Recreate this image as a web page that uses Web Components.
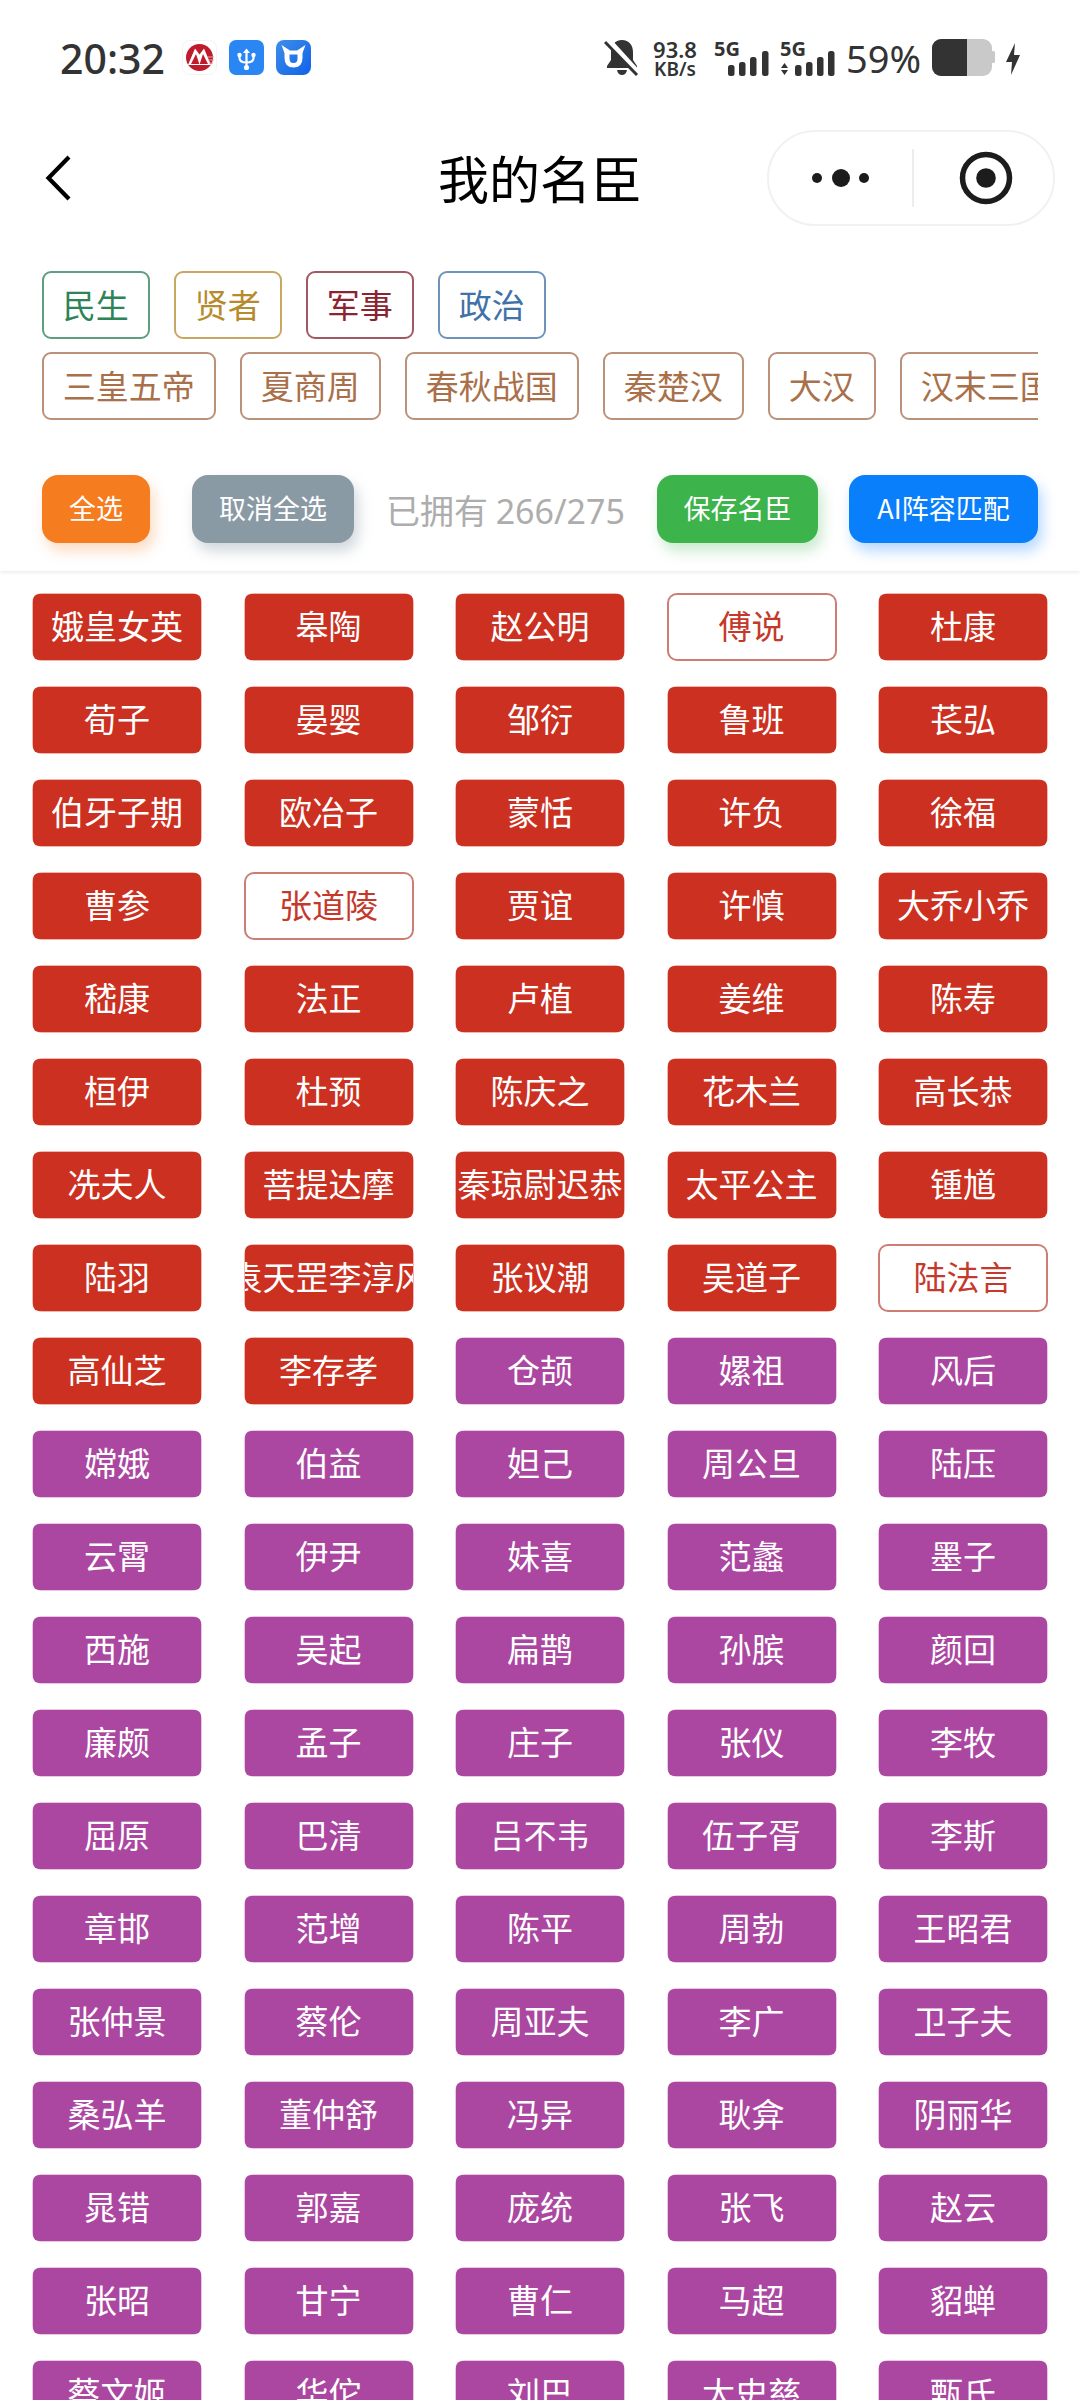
<!DOCTYPE html>
<html lang="zh">
<head>
<meta charset="utf-8">
<title>我的名臣</title>
<style>
  html, body { margin: 0; padding: 0; background: #fff; }
  body { width: 1080px; height: 2400px; overflow: hidden; font-family: "Noto Sans CJK SC", "Noto Sans", sans-serif; }
</style>
</head>
<body>
<status-bar></status-bar>
<nav-bar heading="我的名臣"></nav-bar>
<filter-panel></filter-panel>
<minister-grid></minister-grid>

<script>
class StatusBar extends HTMLElement {
    constructor() {
        super();
        this.attachShadow({ mode: 'open' });
    }

    connectedCallback() {
        const bars = (a, b, c, d) => `
            <rect x="${a}" y="27" width="6.5" height="11" rx="2.5" fill="#333"/>
            <rect x="${b}" y="24" width="6.5" height="14" rx="2.5" fill="#333"/>
            <rect x="${c}" y="19" width="6.5" height="19" rx="2.5" fill="#333"/>
            <rect x="${d}" y="13" width="6.5" height="25" rx="2.5" fill="#333"/>`;
        this.shadowRoot.innerHTML = `
            <style>
                :host { display: flex; height: 116px; box-sizing: border-box; padding: 38px 58px 0 60px; justify-content: space-between; color: #333; font-family: "Noto Sans", "Open Sans", sans-serif; }
                .left, .right { display: flex; align-items: flex-start; height: 40px; }
                .time { width: 122px; font-size: 41px; font-weight: 500; line-height: 40px; }
                .app { width: 35px; height: 35px; margin: 2px 12px 0 0; flex: none; display: block; }
                .bell { width: 36px; height: 38px; display: block; }
                .speed { margin-left: 13px; width: 44px; display: flex; flex-direction: column; align-items: center; font-weight: 600; }
                .speed b { font-size: 22px; line-height: 22px; font-weight: 600; }
                .speed i { font-style: normal; font-size: 19px; line-height: 19px; }
                .sig { display: block; width: 56px; height: 38px; margin-left: 17px; overflow: visible; }
                .sig + .sig { margin-left: 10px; }
                .pct { width: 76px; font-size: 38px; line-height: 40px; margin-left: 10px; }
                .bat { display: block; width: 64px; height: 38px; margin-left: 10px; }
                .bolt { display: block; width: 18px; height: 34px; margin: 4px 0 0 8px; }
            </style>
            <div class="left">
                <span class="time">20:32</span>
                <svg class="app" viewBox="0 0 35 35">
                    <rect x=".5" y=".5" width="34" height="34" rx="7" fill="#fff" stroke="#f3f3f3"/>
                    <circle cx="17.5" cy="17.5" r="13.5" fill="#bf1b2c"/>
                    <path d="M6 25 13 8.5 17.5 14.5 22 8.5 29 25Z" fill="#fff"/>
                    <path d="M9 24 14 14 17.3 24ZM17.7 24 21 14 26 24Z" fill="#bf1b2c"/>
                    <path d="M25 17h7M26 20h6M27 23h4" stroke="#e8a3a8" stroke-width="1.2"/>
                </svg>
                <svg class="app" viewBox="0 0 35 35">
                    <rect width="35" height="35" rx="7" fill="#2a86f3"/>
                    <path d="M17.5 12v16M10.5 15v3q0 4.5 7 4.5t7-4.5v-3" fill="none" stroke="#fff" stroke-width="2.2"/>
                    <path d="M17.5 8.5l3.5 4.5h-7z" fill="#fff"/>
                    <circle cx="10.5" cy="15" r="2.2" fill="#fff"/><circle cx="24.5" cy="15" r="2.2" fill="#fff"/><circle cx="17.5" cy="27.5" r="2.6" fill="#fff"/>
                </svg>
                <svg class="app" viewBox="0 0 35 35">
                    <defs><linearGradient id="cow" x1="0" y1="0" x2="1" y2="1"><stop offset="0" stop-color="#3f8ee8"/><stop offset="1" stop-color="#0f62ea"/></linearGradient></defs>
                    <rect width="35" height="35" rx="8" fill="url(#cow)"/>
                    <path fill-rule="evenodd" d="M8.5 10.5H26.5V18Q26.5 27.5 17.5 27.5Q8.5 27.5 8.5 18ZM13.5 14.5H21.5V18.5Q21.5 23 17.5 23Q13.5 23 13.5 18.5Z" fill="#fff"/>
                    <path d="M5.5 5 8.5 13 14 10.5ZM29.5 5 26.5 13 21 10.5Z" fill="#fff"/>
                </svg>
            </div>
            <div class="right">
                <svg class="bell" viewBox="0 0 36 38">
                    <path d="M18 2c7 0 11 5 11 12v8l4 6v2H3v-2l4-6v-8C7 7 11 2 18 2Z" fill="#333"/>
                    <path d="M13 32h10q-1 5-5 5t-5-5Z" fill="#333"/>
                    <path d="M3 1 34 35" stroke="#fff" stroke-width="6"/>
                    <path d="M1 4 33 37" stroke="#333" stroke-width="3"/>
                </svg>
                <div class="speed"><b>93.8</b><i>KB/s</i></div>
                <svg class="sig" viewBox="0 0 56 38">
                    <text x="0" y="18" font-size="20" font-weight="700" fill="#333" font-family="Noto Sans">5G</text>
                    ${bars(14, 25, 36, 48)}
                </svg>
                <svg class="sig" viewBox="0 0 56 38">
                    <text x="0" y="18" font-size="20" font-weight="700" fill="#333" font-family="Noto Sans">5G</text>
                    <path d="M1 30 4.5 25 8 30ZM1 32 4.5 37 8 32Z" fill="#333"/>
                    ${bars(15, 26, 37, 48)}
                </svg>
                <span class="pct">59%</span>
                <svg class="bat" viewBox="0 0 64 38">
                    <rect x="0" y="1" width="60" height="37" rx="9" fill="#c9c9c9"/>
                    <rect x="59" y="13" width="4" height="12" rx="1.5" fill="#c9c9c9"/>
                    <path d="M35 1H9a9 9 0 0 0-9 9v19a9 9 0 0 0 9 9h26Z" fill="#333"/>
                </svg>
                <svg class="bolt" viewBox="0 0 18 34"><path d="M11 1 2 20h6l-1 13L16 13h-6Z" fill="#333"/></svg>
            </div>
        `;
    }
}

class NavBar extends HTMLElement {
    constructor() {
        super();
        this.attachShadow({ mode: 'open' });
    }

    connectedCallback() {
        this.shadowRoot.innerHTML = `
            <style>
                :host { display: block; height: 134px; box-sizing: border-box; padding-top: 14px; position: relative; }
                .bar { height: 96px; display: flex; align-items: center; justify-content: space-between; padding: 0 25px 0 44px; }
                .back { width: 28px; height: 48px; display: block; }
                h1 { position: absolute; left: 0; right: 0; top: 14px; margin: 0; height: 96px; line-height: 94px; text-align: center; font-size: 51px; font-weight: 400; color: #000; pointer-events: none; }
                .capsule { width: 288px; height: 96px; box-sizing: border-box; border: 2px solid #f1f1f1; border-radius: 48px; display: flex; align-items: center; background: #fff; }
                .more { width: 143px; display: block; height: 24px; }
                .sep { width: 2px; height: 58px; background: #ededed; }
                .target { width: 54px; height: 54px; margin-left: 45px; display: block; }
            </style>
            <div class="bar">
                <svg class="back" viewBox="0 0 28 48"><path d="M25 3 4.5 24 25 45" fill="none" stroke="#000" stroke-width="4.2"/></svg>
                <h1>${this.getAttribute('heading')}</h1>
                <div class="capsule">
                    <svg class="more" viewBox="0 0 143 24"><circle cx="48" cy="12" r="5" fill="#1c1c1c"/><circle cx="72" cy="12" r="9" fill="#1c1c1c"/><circle cx="95" cy="12" r="5" fill="#1c1c1c"/></svg>
                    <span class="sep"></span>
                    <svg class="target" viewBox="0 0 54 54"><circle cx="27" cy="27" r="23.5" fill="none" stroke="#1c1c1c" stroke-width="5.5"/><circle cx="27" cy="27" r="9.8" fill="#1c1c1c"/></svg>
                </div>
            </div>
        `;
    }
}

class FilterChip extends HTMLElement {
    constructor() {
        super();
        this.attachShadow({ mode: 'open' });
    }

    connectedCallback() {
        const color = this.getAttribute('color');
        const line = this.getAttribute('line');
        this.shadowRoot.innerHTML = `
            <style>
                :host { display: block; flex: none; }
                div { box-sizing: border-box; height: 68px; line-height: 62px; padding: 0 18.75px; border: 2px solid ${line}; border-radius: 9px; color: ${color}; font-size: 33px; white-space: nowrap; background: #fff; }
            </style>
            <div><slot></slot></div>
        `;
    }
}

class ActionButton extends HTMLElement {
    constructor() {
        super();
        this.attachShadow({ mode: 'open' });
    }

    connectedCallback() {
        const bg = this.getAttribute('bg');
        const shadow = this.getAttribute('shadow');
        this.shadowRoot.innerHTML = `
            <style>
                :host { display: block; flex: none; width: ${this.getAttribute('width')}px; }
                div { height: 68px; line-height: 66px; text-align: center; background: ${bg}; color: #fff; font-size: 27px; border-radius: 16px; box-shadow: 4px 8px 14px ${shadow}; white-space: nowrap; }
            </style>
            <div><slot></slot></div>
        `;
    }
}

class FilterPanel extends HTMLElement {
    constructor() {
        super();
        this.attachShadow({ mode: 'open' });
    }

    connectedCallback() {
        const eras = ['三皇五帝', '夏商周', '春秋战国', '秦楚汉', '大汉', '汉末三国'];
        this.shadowRoot.innerHTML = `
            <style>
                :host { display: block; height: 321px; box-sizing: border-box; padding: 21px 42px 0; box-shadow: 0 1px 4px rgba(0,0,0,.1); clip-path: inset(0 0 -10px 0); position: relative; background: #fff; }
                .row { display: flex; gap: 24.5px; overflow: hidden; height: 69px; }
                .row + .row { margin-top: 12px; }
                .tools { display: flex; align-items: center; margin-top: 54px; height: 68px; }
                .count { flex: 1; font-size: 34px; color: #adadad; white-space: nowrap; margin-left: 32px; }
                .count span { font-family: "Noto Sans", sans-serif; }
            </style>
            <div class="row">
                <filter-chip color="#2e8458" line="#5f9e80">民生</filter-chip>
                <filter-chip color="#b58b2e" line="#c7a763">贤者</filter-chip>
                <filter-chip color="#8a2430" line="#a25a62">军事</filter-chip>
                <filter-chip color="#3f72a8" line="#6f94bb">政治</filter-chip>
            </div>
            <div class="row">
                ${eras.map(e => `<filter-chip color="#a9704a" line="#bb9179">${e}</filter-chip>`).join('')}
            </div>
            <div class="tools">
                <action-button width="108" bg="#f57c1f" shadow="rgba(245,124,31,.28)">全选</action-button>
                <action-button width="162" bg="#8a9aa5" shadow="rgba(138,154,165,.4)" style="margin-left:42px">取消全选</action-button>
                <span class="count">已拥有 <span>266/275</span></span>
                <action-button width="161" bg="#3cb44b" shadow="rgba(60,180,75,.28)">保存名臣</action-button>
                <action-button width="189" bg="#0a7ffb" shadow="rgba(10,127,251,.3)" style="margin-left:31px">AI阵容匹配</action-button>
            </div>
        `;
    }
}

class MinisterCard extends HTMLElement {
    constructor() {
        super();
        this.attachShadow({ mode: 'open' });
    }

    connectedCallback() {
        const themes = {
            red: { edge: '#f0b5ad', fill: '#cc3020', ink: '#fff', width: 1, radius: 6 },
            purple: { edge: '#e8c6e4', fill: '#ab47a1', ink: '#fff', width: 1, radius: 6 },
            off: { edge: '#cc7d74', fill: '#fff', ink: '#c5392b', width: 2, radius: 8 }
        };
        const t = themes[this.getAttribute('kind')];
        this.shadowRoot.innerHTML = `
            <style>
                :host { display: block; min-width: 0; }
                .card { box-sizing: border-box; height: 68px; border: ${t.width}px solid ${t.edge}; background: ${t.edge}; border-radius: 10px; }
                .fill { height: 100%; background: ${t.fill}; color: ${t.ink}; border-radius: ${t.radius}px; font-size: 33px; line-height: ${66 - 2 * t.width - 1}px; display: flex; justify-content: center; overflow: hidden; white-space: nowrap; }
                span { flex: none; }
            </style>
            <div class="card"><div class="fill"><span><slot></slot></span></div></div>
        `;
    }
}

class MinisterGrid extends HTMLElement {
    constructor() {
        super();
        this.attachShadow({ mode: 'open' });
    }

    connectedCallback() {
        const names = '娥皇女英 皋陶 赵公明 傅说 杜康 荀子 晏婴 邹衍 鲁班 苌弘 伯牙子期 欧冶子 蒙恬 许负 徐福 曹参 张道陵 贾谊 许慎 大乔小乔 嵇康 法正 卢植 姜维 陈寿 桓伊 杜预 陈庆之 花木兰 高长恭 冼夫人 菩提达摩 秦琼尉迟恭 太平公主 锺馗 陆羽 袁天罡李淳风 张议潮 吴道子 陆法言 高仙芝 李存孝 仓颉 嫘祖 风后 嫦娥 伯益 妲己 周公旦 陆压 云霄 伊尹 妹喜 范蠡 墨子 西施 吴起 扁鹊 孙膑 颜回 廉颇 孟子 庄子 张仪 李牧 屈原 巴清 吕不韦 伍子胥 李斯 章邯 范增 陈平 周勃 王昭君 张仲景 蔡伦 周亚夫 李广 卫子夫 桑弘羊 董仲舒 冯异 耿弇 阴丽华 晁错 郭嘉 庞统 张飞 赵云 张昭 甘宁 曹仁 马超 貂蝉 蔡文姬 华佗 刘巴 太史慈 甄氏'.split(' ');
        const notOwned = ['傅说', '张道陵', '陆法言'];
        const purpleFrom = names.indexOf('仓颉');
        this.shadowRoot.innerHTML = `
            <style>
                :host { display: grid; grid-template-columns: repeat(5, 170px); column-gap: 41.5px; row-gap: 25px; padding: 22px 32px 0; }
            </style>
            ${names.map((name, i) => {
                const kind = notOwned.includes(name) ? 'off' : (i >= purpleFrom ? 'purple' : 'red');
                return `<minister-card kind="${kind}">${name}</minister-card>`;
            }).join('')}
        `;
    }
}

customElements.define('status-bar', StatusBar);
customElements.define('nav-bar', NavBar);
customElements.define('filter-chip', FilterChip);
customElements.define('action-button', ActionButton);
customElements.define('filter-panel', FilterPanel);
customElements.define('minister-card', MinisterCard);
customElements.define('minister-grid', MinisterGrid);
</script>
</body>
</html>
